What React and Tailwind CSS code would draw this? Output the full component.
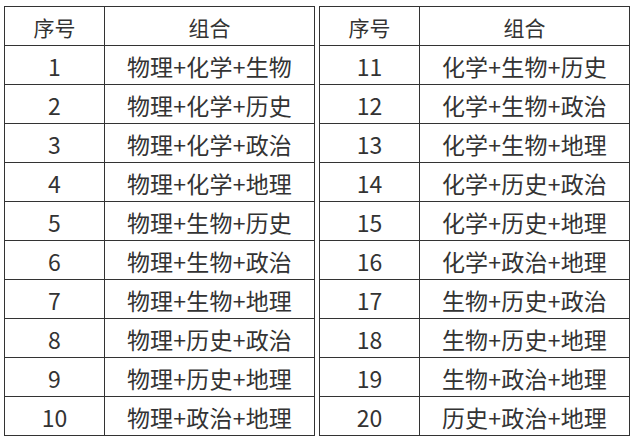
import React from "react";

const left = [
  ["1", "物理+化学+生物"],
  ["2", "物理+化学+历史"],
  ["3", "物理+化学+政治"],
  ["4", "物理+化学+地理"],
  ["5", "物理+生物+历史"],
  ["6", "物理+生物+政治"],
  ["7", "物理+生物+地理"],
  ["8", "物理+历史+政治"],
  ["9", "物理+历史+地理"],
  ["10", "物理+政治+地理"],
];

const right = [
  ["11", "化学+生物+历史"],
  ["12", "化学+生物+政治"],
  ["13", "化学+生物+地理"],
  ["14", "化学+历史+政治"],
  ["15", "化学+历史+地理"],
  ["16", "化学+政治+地理"],
  ["17", "生物+历史+政治"],
  ["18", "生物+历史+地理"],
  ["19", "生物+政治+地理"],
  ["20", "历史+政治+地理"],
];

const Half = ({ rows }) => (
  <div className="border-l border-t border-[#333] w-[311px]">
    <div className="flex h-[39px] text-[21px]">
      <div className="w-[100px] border-r border-b border-[#333] flex items-center justify-center pt-[2px]">
        序号
      </div>
      <div className="w-[210px] border-r border-b border-[#333] flex items-center justify-center pt-[2px]">
        组合
      </div>
    </div>
    {rows.map(([n, combo]) => (
      <div key={n} className="flex h-[39px] text-[23px]">
        <div className="w-[100px] border-r border-b border-[#333] flex items-center justify-center pt-[3px]">
          {n}
        </div>
        <div className="w-[210px] border-r border-b border-[#333] flex items-center justify-center pt-[3px] tracking-[0.2px]">
          {combo}
        </div>
      </div>
    ))}
  </div>
);

export default function App() {
  return (
    <div
      className="w-[639px] h-[442px] bg-white text-[#333] pl-[4px] pt-[6px] flex items-start gap-[4px] leading-none"
      style={{ fontFamily: '"Noto Sans CJK SC", "Noto Sans", sans-serif' }}
    >
      <Half rows={left} />
      <Half rows={right} />
    </div>
  );
}
